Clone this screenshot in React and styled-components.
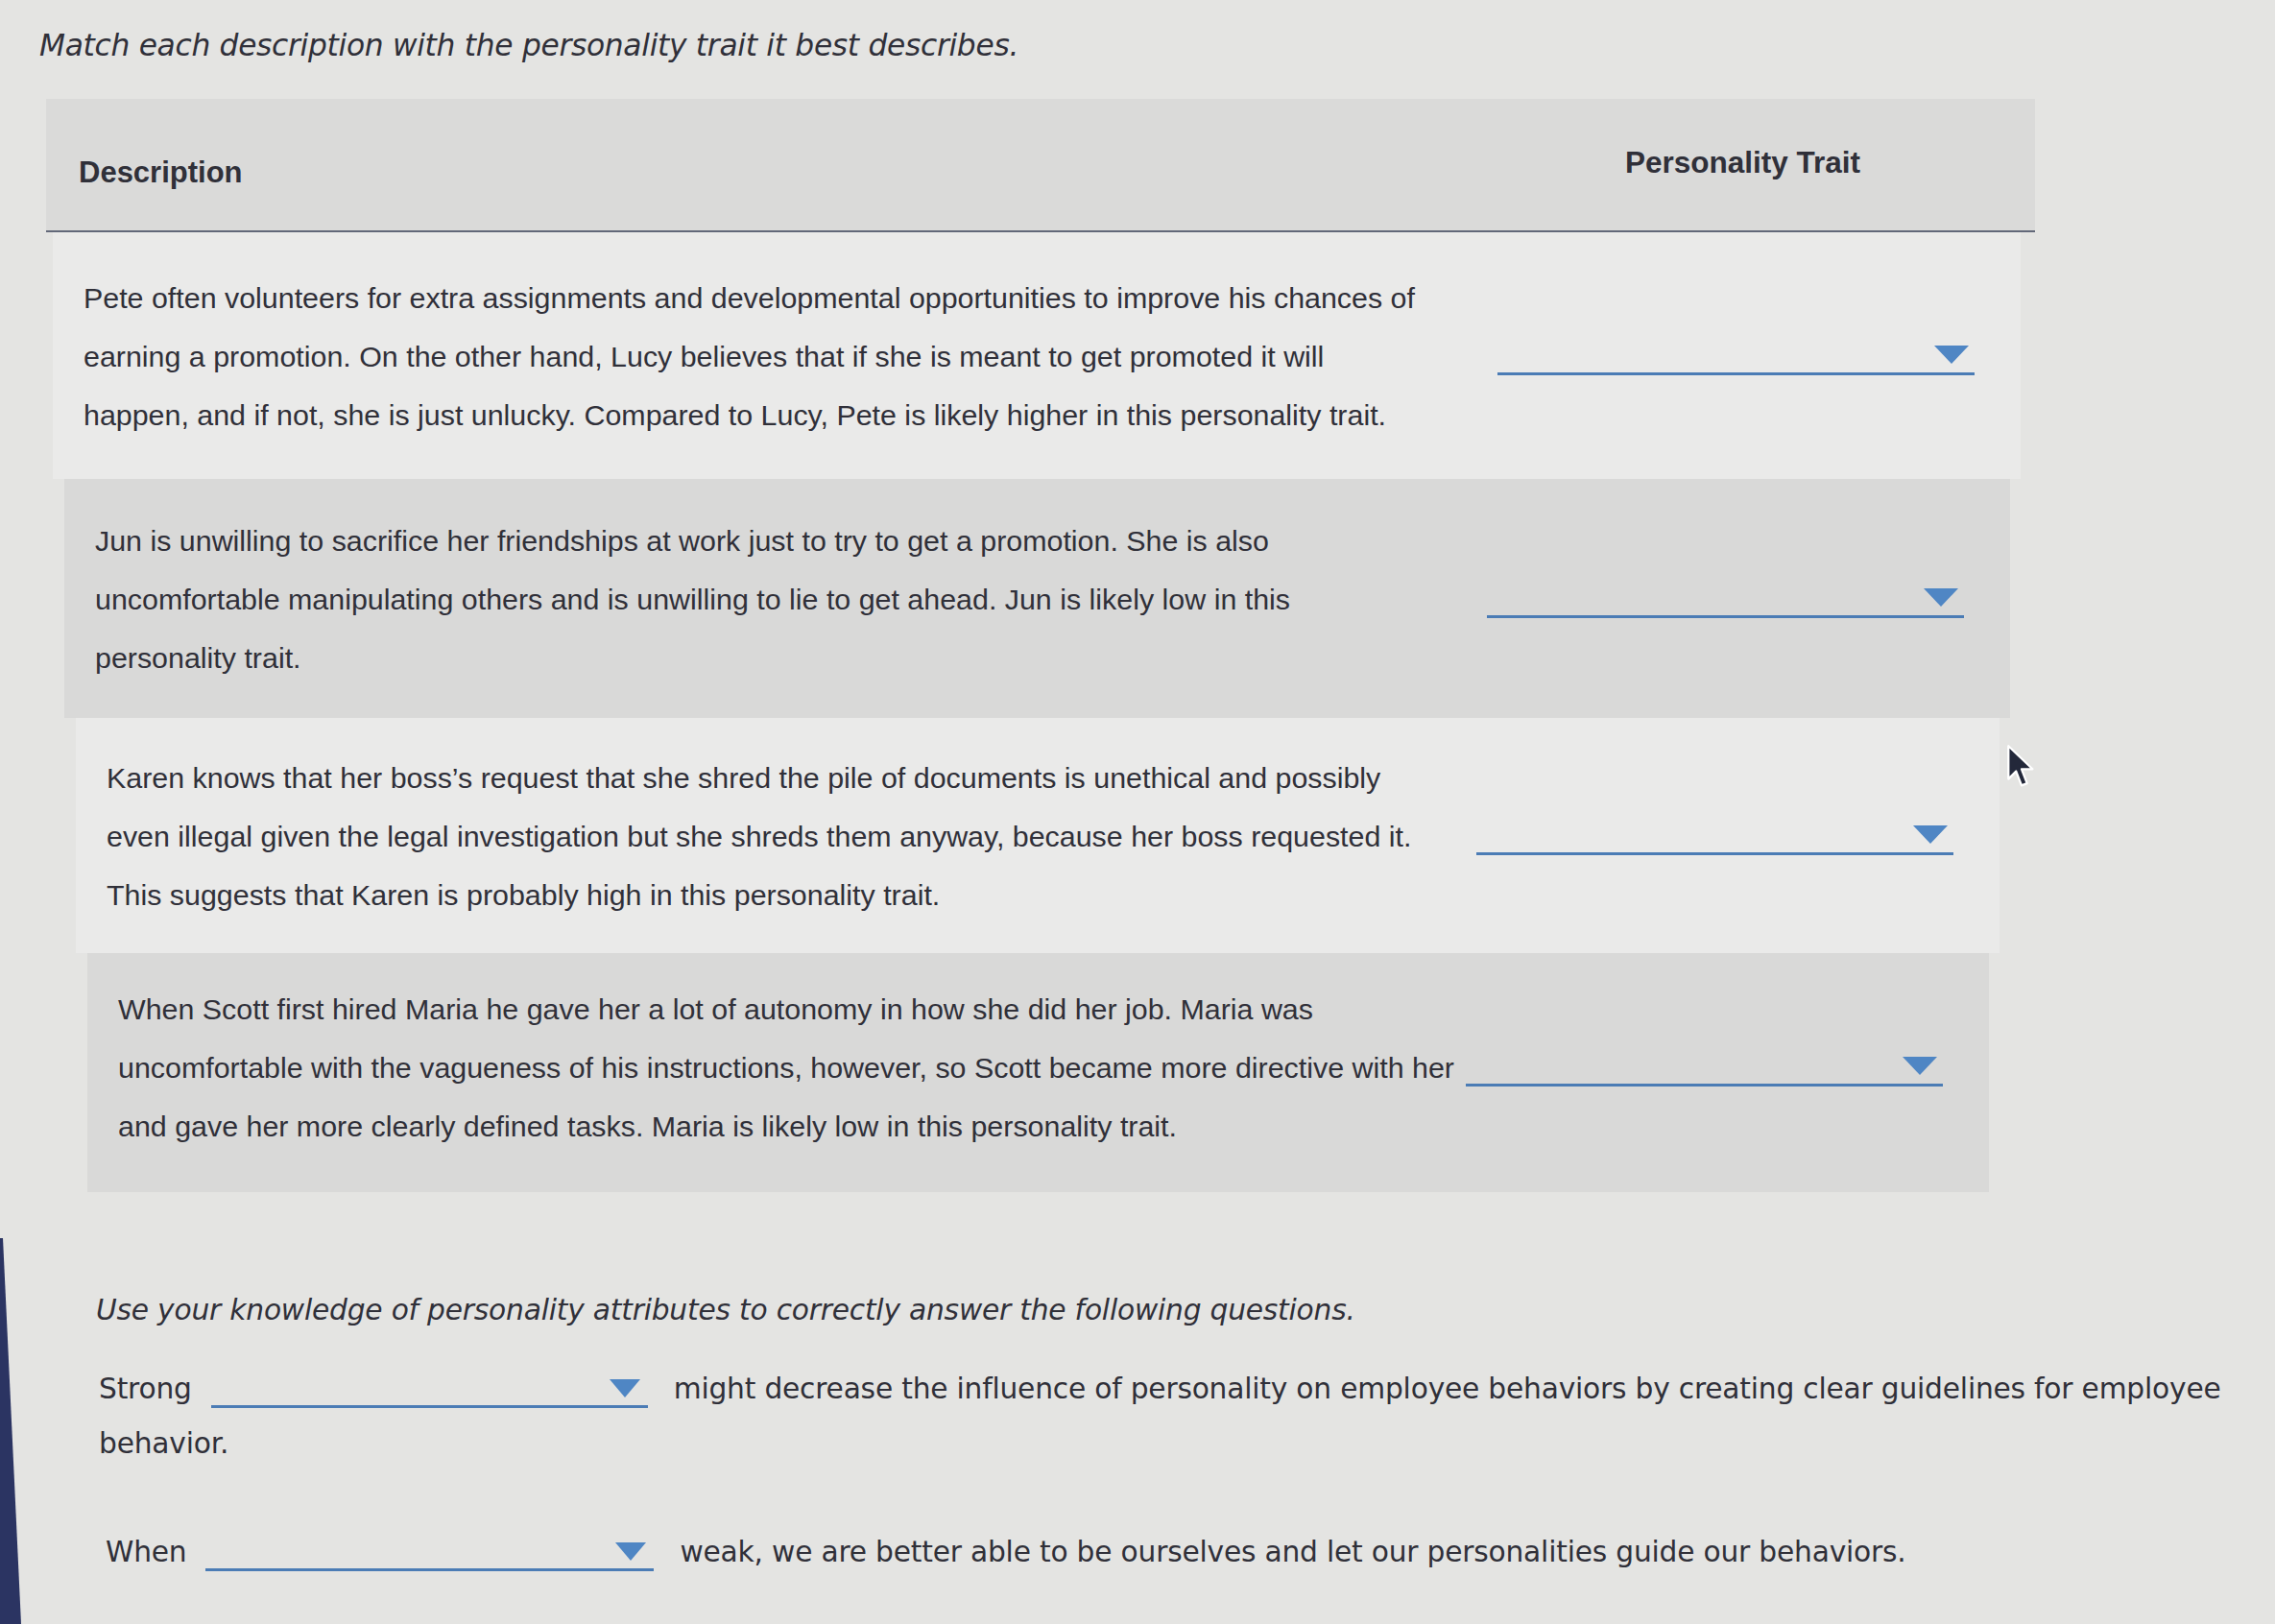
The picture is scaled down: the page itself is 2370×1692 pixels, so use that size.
import styled, { createGlobalStyle } from "styled-components";

const GlobalStyle = createGlobalStyle`
  html, body {
    margin: 0;
    padding: 0;
    background-color: #e4e4e2;
  }
  #root {
    width: 2370px;
    height: 1692px;
    overflow: hidden;
  }
`;

const Page = styled.div`
  position: relative;
  width: 2370px;
  height: 1692px;
  padding-top: 24px;
  box-sizing: border-box;
  background-color: #e4e4e2;
  color: #303039;
`;

const Title = styled.p`
  margin: 0;
  padding-left: 41px;
  font-family: "DejaVu Sans", Verdana, sans-serif;
  font-style: italic;
  font-size: 31.3px;
  line-height: 46px;
  letter-spacing: -0.3px;
`;

const Table = styled.div`
  margin: 33px 0 0 48px;
  width: 2072px;
  font-family: "Liberation Sans", Arial, sans-serif;
`;

const Header = styled.div`
  display: flex;
  justify-content: space-between;
  align-items: center;
  height: 137px;
  background-color: #dadad9;
  border-bottom: 2px solid #626879;
`;

const HeadCell = styled.div`
  font-weight: 700;
  font-size: ${(p) => (p.$right ? 31.5 : 31)}px;
  padding: ${(p) => (p.$right ? "0 182px 4px 0" : "16px 0 0 34px")};
`;

/* rows narrow a little toward the bottom, as in the photographed screen */
const Row = styled.div`
  display: grid;
  grid-template-columns: 1fr 497px;
  align-items: center;
  margin: 0 ${(p) => 15 + p.$inset * 11}px 0 ${(p) => 7 + p.$inset * 12}px;
  padding: ${(p) => p.$pad} 48px ${(p) => p.$padBottom} 32px;
  background-color: ${(p) => (p.$dark ? "#d9d9d8" : "#eaeae9")};
`;

const Text = styled.div`
  font-size: 30.4px;
  line-height: 61px;
  white-space: nowrap;
`;

const Select = styled.div`
  display: flex;
  justify-content: flex-end;
  align-items: flex-end;
  height: 38px;
  padding: 0 6px 9px 0;
  box-sizing: border-box;
  border-bottom: 3px solid #4b7cb5;
`;

const Arrow = styled.span`
  width: 0;
  height: 0;
  border-left: ${(p) => p.$half}px solid transparent;
  border-right: ${(p) => p.$half}px solid transparent;
  border-top: 19px solid #4f86c4;
`;

const Questions = styled.div`
  margin-top: 100px;
  padding-left: 100px;
  font-family: "DejaVu Sans", Verdana, sans-serif;
  font-size: 29.7px;
  letter-spacing: -0.2px;
`;

const Instruction = styled.p`
  margin: 0;
  font-style: italic;
  line-height: 46px;
`;

const Question = styled.p`
  margin: ${(p) => p.$gap}px 0 0 ${(p) => p.$indent}px;
  line-height: 57px;
  white-space: nowrap;
`;

const InlineSelect = styled.span`
  display: inline-flex;
  justify-content: flex-end;
  align-items: flex-end;
  width: ${(p) => p.$width}px;
  height: 37px;
  padding: 0 8px 8px 0;
  box-sizing: border-box;
  margin: 0 27px 0 20px;
  vertical-align: 1px;
  border-bottom: 3px solid #4b7cb5;
`;

const Cursor = styled.svg`
  position: absolute;
  left: 2090px;
  top: 775px;
`;

const Bezel = styled.div`
  position: absolute;
  left: 0;
  top: 1290px;
  width: 24px;
  height: 402px;
  background-color: #2b3462;
  clip-path: polygon(0 0, 3px 0, 22px 100%, 0 100%);
`;

const rows = [
  {
    pad: ["38px", "36px"],
    lines: [
      "Pete often volunteers for extra assignments and developmental opportunities to improve his chances of",
      "earning a promotion. On the other hand, Lucy believes that if she is meant to get promoted it will",
      "happen, and if not, she is just unlucky. Compared to Lucy, Pete is likely higher in this personality trait.",
    ],
  },
  {
    dark: true,
    pad: ["34px", "32px"],
    lines: [
      "Jun is unwilling to sacrifice her friendships at work just to try to get a promotion. She is also",
      "uncomfortable manipulating others and is unwilling to lie to get ahead. Jun is likely low in this",
      "personality trait.",
    ],
  },
  {
    pad: ["32px", "30px"],
    lines: [
      "Karen knows that her boss\u2019s request that she shred the pile of documents is unethical and possibly",
      "even illegal given the legal investigation but she shreds them anyway, because her boss requested it.",
      "This suggests that Karen is probably high in this personality trait.",
    ],
  },
  {
    dark: true,
    pad: ["28px", "38px"],
    lines: [
      "When Scott first hired Maria he gave her a lot of autonomy in how she did her job. Maria was",
      "uncomfortable with the vagueness of his instructions, however, so Scott became more directive with her",
      "and gave her more clearly defined tasks. Maria is likely low in this personality trait.",
    ],
  },
];

export default function App() {
  return (
    <>
      <GlobalStyle />
      <Page>
        <Title>Match each description with the personality trait it best describes.</Title>

        <Table>
          <Header>
            <HeadCell>Description</HeadCell>
            <HeadCell $right>Personality Trait</HeadCell>
          </Header>
          {rows.map((row, i) => (
            <Row key={i} $inset={i} $dark={row.dark} $pad={row.pad[0]} $padBottom={row.pad[1]}>
              <Text>
                {row.lines.map((line, j) => (
                  <div key={j}>{line}</div>
                ))}
              </Text>
              <Select>
                <Arrow $half={18} />
              </Select>
            </Row>
          ))}
        </Table>

        <Questions>
          <Instruction>
            Use your knowledge of personality attributes to correctly answer the following questions.
          </Instruction>
          <Question $gap={30} $indent={3}>
            Strong
            <InlineSelect $width={455}>
              <Arrow $half={16} />
            </InlineSelect>
            might decrease the influence of personality on employee behaviors by creating clear guidelines for employee
            <br />
            behavior.
          </Question>
          <Question $gap={56} $indent={10}>
            When
            <InlineSelect $width={467}>
              <Arrow $half={16} />
            </InlineSelect>
            weak, we are better able to be ourselves and let our personalities guide our behaviors.
          </Question>
        </Questions>

        <Cursor width="32" height="48" viewBox="0 0 28 42">
          <path
            d="M2 2 L2 32 L9 25 L14 38 L19 36 L14 23 L24 23 Z"
            fill="#23283a"
            stroke="#ffffff"
            strokeWidth="2"
            strokeLinejoin="round"
          />
        </Cursor>
        <Bezel />
      </Page>
    </>
  );
}
